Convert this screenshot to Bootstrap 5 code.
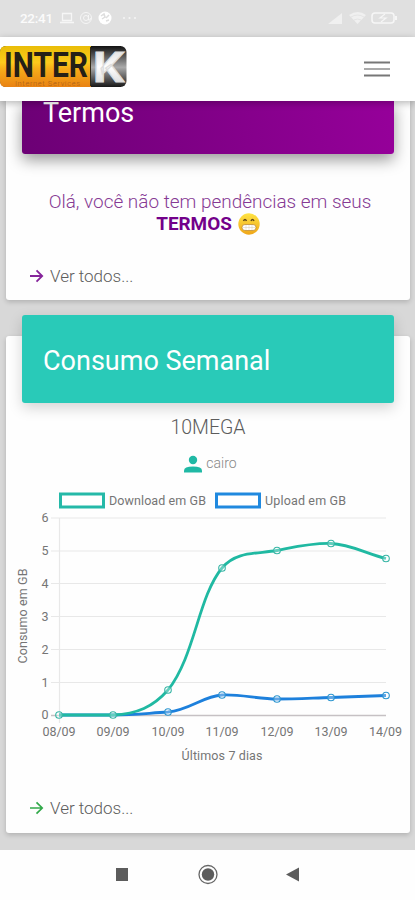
<!DOCTYPE html>
<html lang="pt-BR">
<head>
<meta charset="utf-8">
<meta name="viewport" content="width=device-width, initial-scale=1">
<title>InterK</title>
<link href="https://cdn.jsdelivr.net/npm/bootstrap@5.3.0/dist/css/bootstrap.min.css" rel="stylesheet">
<style>
body{font-family:Roboto,sans-serif;font-weight:300;background:#d8d8d8;height:900px;overflow:hidden;color:#666}
svg{display:block;flex:none}
svg text{font-family:Roboto,sans-serif}
.status-bar{height:37px;background:#e0e0e0}
.top-nav{height:64px;box-shadow:0 2px 7px rgba(0,0,0,.28);z-index:5}
.screen{height:749px;padding:0 5px 0 6px}
.panel{border:0;border-radius:3px;box-shadow:0 2px 5px rgba(0,0,0,.18);background:#fefefe}
.panel-terms{height:199px;border-radius:0 0 3px 3px}
.panel-usage{height:497px;margin-top:36px}
.banner{margin:0 16px;color:#fff;font-size:27px;font-weight:400;line-height:32px;padding-left:21px}
.banner-terms{height:53px;background:linear-gradient(80deg,#6c0075,#96009a);border-radius:0 0 3px 3px;box-shadow:0 6px 15px rgba(0,0,0,.4)}
.banner-terms span{margin-top:-4px;height:32px}
.banner-usage{height:88px;margin-top:-21px;background:#29cab8;border-radius:3px;box-shadow:0 5px 14px rgba(0,0,0,.17)}
.notice{color:#863a94;font-size:18.95px;line-height:22px;margin-top:37px}
.notice b{color:#73008a;font-weight:700;font-size:18.9px}
.more{color:#5c5c5c;font-size:17px;line-height:20px;padding-left:23px;gap:6px}
.more-terms{margin-top:31px}
.more-usage{margin-top:25px}
.plan{font-size:19.5px;line-height:22px;margin-top:14px;color:#5c5c5c}
.client{font-size:13.5px;line-height:18px;height:22px;margin-top:14px;padding-left:5px;color:#888;gap:4px}
.client span{margin-top:-2px;font-size:14px}
.android{height:50px;background:#fefefe}
</style>
<script src="https://cdn.jsdelivr.net/npm/bootstrap@5.3.0/dist/js/bootstrap.bundle.min.js"></script>
</head>
<body class="d-flex flex-column">
<div class="status-bar flex-shrink-0">
<svg width="415" height="37" fill="none" stroke="#f6f6f6">
<text x="20" y="23" font-size="13.4" font-weight="500" fill="#fbfbfb" stroke="none" textLength="33">22:41</text>
<path d="M62.500 13.500h9v7h-9zM60 22.500h14" stroke-width="1.300"/>
<circle cx="86" cy="18" r="5.500"/><circle cx="86" cy="18" r="2.500"/><path d="M88.500 15v5q2 1 2-2"/>
<circle cx="105" cy="18" r="6.500" fill="#fff" stroke="none"/><path d="M101 16l3-2 1 3-3 2M106 18l3-3M106 21l3-1" stroke="#dedede" stroke-width="1.500"/>
<g fill="#f6f6f6" stroke="none"><circle cx="124" cy="18" r="1"/><circle cx="129.500" cy="18" r="1"/><circle cx="135" cy="18" r="1"/><path d="M328 24l14-11v11zM349 15q9-6 17 0l-8.500 9z" fill="#f0f0f0"/></g>
<path d="M351 17q6.500-4 13 0M354 20q3.500-2 7 0" stroke="#e0e0e0" stroke-width=".8"/>
<rect x="372" y="13" width="22" height="10" rx="3" stroke-width="1.600"/><path d="M396 16v4" stroke-width="2"/><path d="M385 14l-5 4h6l-5 4" stroke-width="1.200"/>
</svg>
</div>
<nav class="top-nav navbar bg-white p-0 flex-nowrap justify-content-between flex-shrink-0">
<svg width="128" height="44" viewBox="0 0 128 44" class="align-self-start mt-2" overflow="visible">
<defs><linearGradient id="gold" x2="0" y2="1"><stop stop-color="#e9bd08"/><stop offset=".4" stop-color="#fcca1c"/><stop offset=".55" stop-color="#f7ae19"/><stop offset="1" stop-color="#e98213"/></linearGradient>
<linearGradient id="steel" x2="0" y2="1"><stop stop-color="#111"/><stop offset=".52" stop-color="#aaa"/><stop offset="1" stop-color="#181818"/></linearGradient>
<linearGradient id="silver" x2="0" y2="1"><stop stop-color="#d4d4d4"/><stop offset=".5" stop-color="#fff"/><stop offset="1" stop-color="#ccc"/></linearGradient></defs>
<rect y="1" width="126.500" height="41" rx="6" fill="url(#steel)"/>
<path d="M6 1h85v41H6q-6 0-6-6V7q0-6 6-6" fill="url(#gold)"/><path d="M90.500 2v39" stroke="#342b17"/>
<text x="4" y="32" font-size="34.500" font-weight="700" fill="#252017" textLength="84" lengthAdjust="spacingAndGlyphs">INTER</text>
<text x="15" y="40.500" font-size="7.500" fill="#a8601a" textLength="65">Internet Services</text>
<text x="93" y="37" font-size="43" font-weight="700" fill="url(#silver)" stroke="#ddd" stroke-width="1.200" textLength="31" lengthAdjust="spacingAndGlyphs">K</text>
</svg>
<svg width="27" height="20" class="me-4"><path d="M0 3.500h26" stroke="#777" stroke-width="2"/><path d="M0 10h26" stroke="#aaa" stroke-width="2"/><path d="M0 16.500h26" stroke="#777" stroke-width="2"/></svg>
</nav>
<main class="screen overflow-hidden flex-shrink-0">
<section class="card panel panel-terms">
<header class="banner banner-terms d-flex"><span>Termos</span></header>
<div class="notice text-center ps-1">Olá, você não tem pendências em seus<div class="d-flex justify-content-center align-items-center gap-1 pe-1"><b>TERMOS</b>
<svg width="24" height="22" viewBox="-1 0 24 22"><defs><linearGradient id="face" x2="0" y2="1"><stop stop-color="#ffe443"/><stop offset="1" stop-color="#efa619"/></linearGradient></defs><circle cx="12" cy="11" r="10.700" fill="url(#face)"/><path d="M6.500 8q1.500-3 3 0M14 8q1.500-3 3 0" fill="none" stroke="#604617" stroke-width="1.500"/><rect x="5" y="11.500" width="14" height="6" rx="3" fill="#fff" stroke="#b98228" stroke-width=".7"/><path d="M5.500 14.500h13M9 12v5M12 12v5M15 12v5" stroke="#d5cbb0" stroke-width=".5"/></svg></div></div>
<div class="more more-terms d-flex align-items-center"><svg width="15" height="14" fill="none" stroke="#85249a" stroke-width="1.800"><path d="M1 7h12M7.500 1.300L13.200 7l-5.700 5.700"/></svg><span>Ver todos...</span></div>
</section>
<section class="card panel panel-usage">
<header class="banner banner-usage d-flex align-items-center"><span class="pt-1">Consumo Semanal</span></header>
<div class="plan text-center">10MEGA</div>
<div class="client d-flex align-items-center justify-content-center"><svg width="18" height="18" fill="#20b9a5"><circle cx="9" cy="5" r="4.200"/><path d="M0 17.500v-2q0-4 9-4t9 4v2z"/></svg><span>cairo</span></div>
<svg class="mt-2" width="404" height="290" viewBox="6 483 404 290" fill="#757575" font-size="12.500" font-weight="400">
<rect x="60.500" y="494" width="43" height="13" fill="#fff" stroke="#25b9a8" stroke-width="3"/>
<text x="109" y="504.500" textLength="97">Download em GB</text>
<rect x="216.500" y="494" width="43" height="13" fill="#fff" stroke="#2089df" stroke-width="3"/>
<text x="265" y="504.500" textLength="81">Upload em GB</text>
<path d="M51 518h335M51 551h335M51 583.500h335M51 616.500h335M51 649.500h335M51 682.500h335M59.500 518v205" stroke="#e8e8e8" stroke-width="1.200" fill="none"/><path d="M51 715.500h335" stroke="#c6c1c4" stroke-width="1.300"/>
<g text-anchor="end"><text x="48.500" y="522">6</text><text x="48.500" y="555">5</text><text x="48.500" y="588">4</text><text x="48.500" y="621">3</text><text x="48.500" y="654">2</text><text x="48.500" y="687">1</text><text x="48.500" y="719">0</text></g>
<g text-anchor="middle"><text x="59" y="736" textLength="33">08/09</text><text x="113" y="736" textLength="33">09/09</text><text x="168" y="736" textLength="33">10/09</text><text x="222" y="736" textLength="33">11/09</text><text x="277" y="736" textLength="33">12/09</text><text x="331" y="736" textLength="33">13/09</text><text x="385.500" y="736" textLength="33">14/09</text><text x="222" y="760" textLength="81">Últimos 7 dias</text><text transform="translate(27 616) rotate(-90)" textLength="95">Consumo em GB</text></g>
<g fill="none" stroke-width="2.800"><path d="M59 715H113C135 715 149 713 168 712C190 710 203 696 222 695C240 694 258 699 277 699C295 699 313 698 331 697.500S368 696 386 695.500" stroke="#1d80dc"/><path d="M59 715H113C137 714 153 707 168 690C195 656 198 597 222 568C236 551 257 554 277 550.500C295 547 311 543 331 543.500C350 544 367 554 386 558.500" stroke="#20b9a2"/></g>
<g fill="#fff" fill-opacity=".3" stroke-width="1.100"><g stroke="#2c95cf"><circle cx="168" cy="712" r="3.300"/><circle cx="222" cy="695" r="3.300"/><circle cx="277" cy="699" r="3.300"/><circle cx="331" cy="697.500" r="3.300"/><circle cx="386" cy="695.500" r="3.300"/></g><g stroke="#37b5a5"><circle cx="59" cy="715" r="3.300"/><circle cx="113" cy="715" r="3.300"/><circle cx="168" cy="690" r="3.300"/><circle cx="222" cy="568" r="3.300"/><circle cx="277" cy="550.500" r="3.300"/><circle cx="331" cy="543.500" r="3.300"/><circle cx="386" cy="558.500" r="3.300"/></g></g>
</svg>
<div class="more more-usage d-flex align-items-center"><svg width="15" height="14" fill="none" stroke="#32a94a" stroke-width="1.700"><path d="M1 7h12M7.500 1.300L13.200 7l-5.700 5.700"/></svg><span>Ver todos...</span></div>
</section>
</main>
<footer class="android flex-shrink-0"><svg width="415" height="50"><path d="M116 18h12v13h-12zM286 24.500l13-7v14z" fill="#5c5c5c"/><circle cx="208" cy="24.500" r="9" fill="none" stroke="#666" stroke-width="1.300"/><circle cx="208" cy="24.500" r="6.200" fill="#5c5c5c"/></svg></footer>
</body>
</html>
